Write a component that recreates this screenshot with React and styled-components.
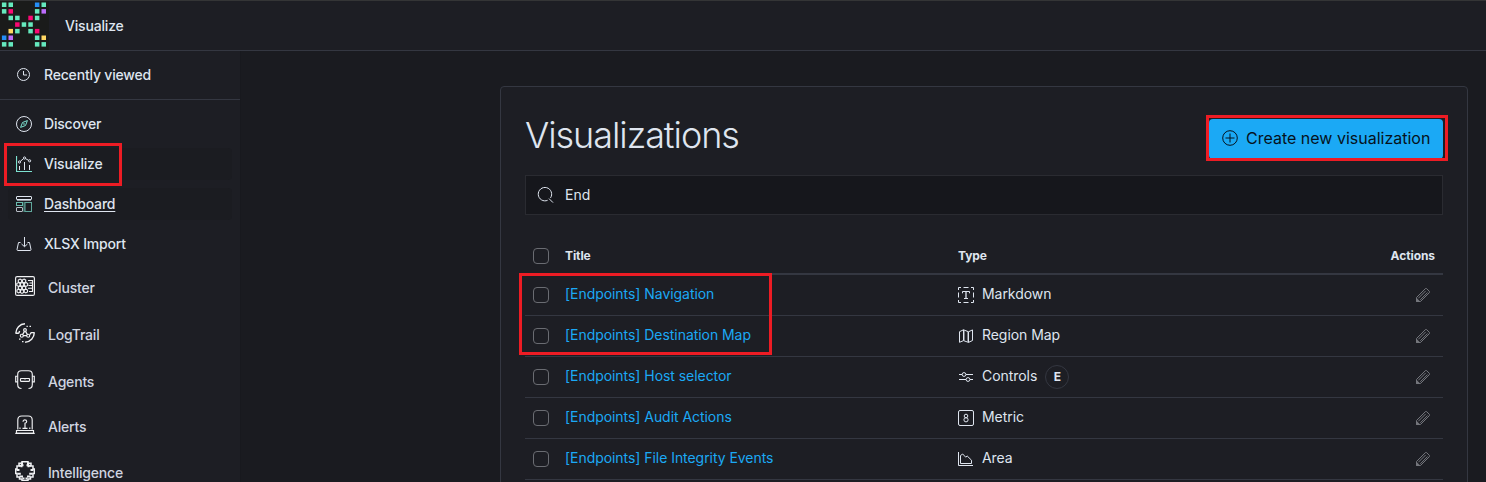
import React from 'react';
import styled, { createGlobalStyle, css } from 'styled-components';

const GlobalStyle = createGlobalStyle`
  *, *::before, *::after { box-sizing: border-box; }
  html, body { margin: 0; padding: 0; }
  body {
    background: #1a1b20;
    color: #dfe5ef;
    font-family: Inter, "Liberation Sans", sans-serif;
    font-size: 14px;
    line-height: 20px;
    overflow: hidden;
  }
`;

const Page = styled.div`
  display: flex;
  flex-direction: column;
  height: 482px;
  overflow: hidden;
`;

const Header = styled.header`
  display: flex;
  align-items: center;
  flex: none;
  height: 51px;
  background: #1d1e24;
  border-top: 1px solid #343536;
  border-bottom: 1px solid #343741;
`;

const Logo = styled.svg`
  display: block;
  width: 49px;
  height: 49px;
  background: #1a1b1a;
`;

const Crumb = styled.span`
  margin-left: 16px;
  padding-top: 1px;
  font-weight: 550;
  letter-spacing: -0.18px;
`;

const Body = styled.div`
  display: flex;
  flex: 1;
  min-height: 0;
`;

const Sidebar = styled.nav`
  flex: none;
  width: 241px;
  background: #1d1e24;
  border-right: 1px solid #18191e;
  overflow: hidden;
`;

const Recent = styled.div`
  height: 49px;
  padding: 8px;
  border-bottom: 1px solid #343741;
`;

const NavGroup = styled.div`
  display: flex;
  flex-direction: column;
  gap: 8px;
  padding: 8px;
`;

const NavItem = styled.a`
  position: relative;
  display: flex;
  align-items: center;
  height: 32px;
  padding: 0 8px;
  gap: 12px;
  border-radius: 4px;
  font-weight: 550;
  letter-spacing: -0.19px;
  color: #dfe5ef;
  text-decoration: ${p => (p.$hover ? 'underline' : 'none')};
  text-underline-offset: 2px;
  ${p => (p.$hover || p.$active) && css`background: #1b1c21;`}
`;

const PluginGroup = styled.div`
  display: flex;
  flex-direction: column;
  margin-top: -5px;
`;

const PluginItem = styled.a`
  display: flex;
  align-items: center;
  height: ${p => p.$height}px;
  flex: none;
  padding-left: 15px;
  gap: 13px;
  font-weight: 550;
  letter-spacing: -0.19px;
  color: #d0d5e0;
  span { padding-top: 4px; }
`;

const Icon = styled.svg`
  flex: none;
  display: block;
  width: ${p => p.$size || 16}px;
  height: ${p => p.$size || 16}px;
  fill: none;
  stroke: ${p => p.$color || '#dfe5ef'};
  stroke-width: ${p => p.$stroke || 1};
`;

const Main = styled.main`
  flex: 1;
  padding: 35px 18px 0 259px;
`;

const Panel = styled.section`
  height: 500px;
  padding: 24px;
  background: #1d1e24;
  border: 1px solid #343741;
  border-radius: 4px;
`;

const TitleRow = styled.div`
  display: flex;
  align-items: center;
  justify-content: space-between;
  height: 48px;
  margin-bottom: 16px;
`;

const Title = styled.h1`
  margin: 0;
  font-size: 36px;
  line-height: 48px;
  font-weight: 300;
  letter-spacing: -1.05px;
`;

const CreateButton = styled.button`
  position: relative;
  display: flex;
  align-items: center;
  gap: 8px;
  width: 234px;
  height: 40px;
  margin-top: 7px;
  padding: 0 12px 2px 13px;
  border: 0;
  border-radius: 4px;
  background: #1ba9f5;
  color: #06121c;
  font: 400 16px/24px Inter, "Liberation Sans", sans-serif;
  white-space: nowrap;
`;

const Highlight = styled.i`
  position: absolute;
  z-index: 2;
  top: ${p => p.$top}px;
  left: ${p => p.$left}px;
  width: ${p => p.$width}px;
  height: ${p => p.$height}px;
  border: 3px solid #ed1c24;
  pointer-events: none;
`;

const Search = styled.div`
  display: flex;
  align-items: center;
  gap: 11px;
  height: 40px;
  padding: 0 11px;
  background: #16171c;
  border: 1px solid #2a2b31;
`;

const Table = styled.div`
  margin-top: 18px;
`;

const Row = styled.div`
  position: relative;
  display: grid;
  grid-template-columns: 40px 393px 1fr auto;
  align-items: center;
  height: 41px;
  padding-right: 12px;
  border-bottom: 1px solid #343741;
`;

const HeadRow = styled(Row)`
  height: 42px;
  padding-top: 6px;
  padding-right: 8px;
  border-bottom-width: 2px;
  font-size: 12px;
  font-weight: 650;
  letter-spacing: -0.08px;
`;

const Checkbox = styled.span`
  width: 16px;
  height: 16px;
  margin-left: 8px;
  border: 1px solid #6a6c72;
  border-radius: 4px;
`;

const TitleLink = styled.a`
  color: #1ba9f5;
  padding-bottom: 2px;
  letter-spacing: -0.05px;
  white-space: nowrap;
`;

const TypeCell = styled.span`
  display: flex;
  align-items: center;
  gap: 8px;
  height: 24px;
  letter-spacing: -0.05px;
`;

const TypeName = styled.span`
  padding-bottom: 2px;
`;

const Badge = styled.span`
  width: 24px;
  height: 24px;
  border: 1px solid #343741;
  border-radius: 50%;
  text-align: center;
  font-size: 12px;
  line-height: 22px;
  font-weight: 700;
`;

const LOGO_ROWS = ['GG...BG', 'GR...GP', '.GG.RG.', '..RGG..', '.YG.GR.', 'BP...GY', 'GG...GG'];
const LOGO_COLORS = { G: '#65e9bd', B: '#258df5', R: '#fa0873', P: '#bd6cfb', Y: '#ffd762' };

const BrandLogo = () => (
  <Logo viewBox="0 0 49 49">
    {LOGO_ROWS.flatMap((row, y) =>
      row.split('').map((c, x) =>
        c === '.' ? null : (
          <rect key={`${x}-${y}`} x={1.9 + x * 6.6} y={1.5 + y * 6.6} width="4.5" height="4.5" fill={LOGO_COLORS[c]} />
        )
      )
    )}
  </Logo>
);

const TEAL = '#7de2d1';

const ICONS = {
  clock: <><circle cx="7.5" cy="7.5" r="6" /><path d="M7.5 4v4h3.5" /></>,
  discover: (
    <>
      <circle cx="8" cy="8" r="7.5" />
      <path stroke={TEAL} d="M11.4 4.6 9.500 9.500 4.600 11.400 6.500 6.500z" />
      <circle stroke={TEAL} cx="8" cy="8" r=".4" />
    </>
  ),
  visualize: (
    <>
      <path stroke={TEAL} strokeWidth="1.2" d="M.5 0v15.500H16" />
      <path d="M3.500 14v-4M8.500 14V6M13.500 14V9" />
      <path d="M4.400 5.300 7.400 2.700M9.600 2.700l3 1.600" />
      <circle cx="3.500" cy="6" r="1.100" /><circle cx="8.500" cy="2" r="1.100" /><circle cx="13.600" cy="4.800" r="1.100" />
    </>
  ),
  dashboard: (
    <>
      <rect x=".5" y=".5" width="15" height="3" rx=".5" />
      <path strokeOpacity=".6" d="M1 4.500h14" />
      <rect stroke={TEAL} strokeOpacity=".8" x=".5" y="6.500" width="6" height="3" />
      <rect strokeOpacity=".8" x=".5" y="11.500" width="6" height="4" rx=".5" />
      <rect stroke={TEAL} strokeOpacity=".7" x="9" y="6.500" width="6.500" height="9" />
      <path stroke={TEAL} strokeOpacity=".6" d="M8 6v10" />
    </>
  ),
  importIcon: <path d="M4.500 6.500h-2L1 13.500q0 1 1 1h12q1 0 1-1L13.500 6.500h-2M8.500 1v9.500M5.500 8l3 2.700 3-2.700" />,
  search: <path d="M10.600 13.300a6.700 6.700 0 1 1 2.900-2.400M12 11.600l4 4" />,
  plus: <><circle cx="8" cy="8" r="7.300" /><path d="M8 3.500v9M3.500 8h9" /></>,
  markdown: (
    <>
      <path d="M.5 3V.5H3M5.500.5h5M13 .5h2.500V3M15.500 5.500v5M15.500 13v2.500H13M10.500 15.500h-5M3 15.500H.5V13M.5 10.500v-5" />
      <path d="M4.500 6.300V4.500h7v1.800M6 11.500h4" /><path strokeOpacity=".65" strokeWidth="2" d="M8 5v6" />
    </>
  ),
  map: (
    <>
      <path d="M1.500 3.700 5.500 1.800v10.800l-4 1.700zM5.500 1.800l5 2v10.600l-5-1.800M10.500 3.800l4-1.900v10.600l-4 1.900" />
      <path strokeOpacity=".45" d="M6.500 2.500v10M9.500 3.700v10" />
    </>
  ),
  controls: <><path d="M1 5.500h3.200M8 5.500h7M1 10.500h7M12 10.500h3" /><circle cx="6" cy="5.500" r="1.900" /><circle cx="10" cy="10.500" r="1.900" /></>,
  metric: <><rect x=".5" y=".5" width="15" height="15" rx="1.500" /><circle cx="8" cy="6" r="1.800" /><circle cx="8" cy="9.800" r="2.100" /></>,
  area: <path d="M.5 1v13.500H15M2.500 12.500v-8L4.700 3l3 3.200L9.200 5l4.300 4.200v3.300z" />,
  pencil: (
    <>
      <path d="M1.500 14.500v-4l8.800-8.800q.7-.7 1.400 0l2.600 2.600q.7.7 0 1.400L5.500 14.500zM3.300 11.300l7.400-7.400M5.200 12.900l7.300-7.300" />
      <path fill="#74767c" d="M1.500 14.500v-3.200l3.200 3.200z" />
    </>
  ),
  cluster: (
    <>
      <rect x=".6" y=".6" width="18.800" height="18.800" rx="1.500" />
      {[[5, 5], [9, 5], [3.500, 8.500], [7, 8.500], [11, 8.500], [5, 12], [9, 12], [7, 15.500], [3.700, 15], [10.800, 15]].map(([x, y]) => (
        <path key={`${x}-${y}`} d={`M${x} ${y - 1.900}l1.700 1v1.800l-1.700 1-1.700-1v-1.800z`} />
      ))}
      <path d="M13 4.500h5M14.500 7H18M13.500 9.500H18M13 12.200h5M14 15.500h4M17.500 4v12" />
    </>
  ),
  logtrail: (
    <>
      <path strokeWidth="1.400" d="M.8 10.200C.9 5.200 4.800.9 10 .7M19.300 9.500c0 5.300-4 9.600-9.200 9.800M.5 10.300h3.300M16 9.600h3.500M3.800 10.300l.8-2.200M16 9.600l-.8 2" />
      <circle cx="10" cy="7" r="1.400" /><circle cx="6.800" cy="12.700" r="1.500" /><circle cx="13.200" cy="12.700" r="1.500" />
      <path strokeWidth="1.300" d="M9.500 8.300 7.600 11.500M10.500 8.300l1.900 3.200M8 12.700h4M11.500 3.400h1.300M14.500 3.400h1.500M4 16.200h1.500M7 18.700h1.500" />
    </>
  ),
  agents: (
    <>
      <path d="M6.500 18.500C4 18.500 2.700 17 2.700 14.500V4.500Q2.700.7 6.500.7h7q3.800 0 3.800 3.800v10c0 2.500-1.300 4-3.800 4" />
      <path d="M2.700 6.200H.7v5.600h2M17.300 6.200h2v5.600h-2" /><rect x="5.500" y="8.500" width="9" height="2.800" rx=".5" />
      <path strokeOpacity=".6" d="M9.500 9.500h1" />
    </>
  ),
  alerts: (
    <>
      <path d="M2.800 14.500V5Q2.800 1 6.800 1h6.400q4 0 4 4v9.500M1.500 15.500h17v2.700h-17z" />
      <path d="M.3 18.300h19.400M8 6.800Q8 4.800 9.700 4.800q2 0 2 1.700 0 1.300-1.700 1.700V13M7.500 13.300h5M5 12.500v1.500M14.800 12.500v1.500" />
    </>
  ),
  brain: (
    <>
      <path strokeWidth="1.5" d="M7 .8h6v1.400h3V5h2v3h1.300v4.500H18V16h-2.500v2H13v1.400H7V18H4.500v-2H2v-3.500H.7V8H2V5h2V2.200h3z" />
      <path strokeWidth="2" d="M7 1.500v2.700h1.500M13 1.500v2.700h-1.500M4 4.800h2.500v1.500M16 4.800h-2.500v1.500M1.500 9h3M18.500 9h-3M2.500 12.800h3.300M17.500 12.800h-3.300M4.500 15.500H7v-1M15.500 15.500H13v-1M8.500 18.500V16.500M11.500 18.500V16.500" />
    </>
  ),
};

const Glyph = ({ name, size = 16, box = 16, color, stroke }) => (
  <Icon viewBox={`0 0 ${box} ${box}`} $size={size} $color={color} $stroke={stroke}>
    {ICONS[name]}
  </Icon>
);

const APPS = [
  { label: 'Discover', icon: 'discover' },
  { label: 'Visualize', icon: 'visualize', active: true },
  { label: 'Dashboard', icon: 'dashboard', hover: true },
  { label: 'XLSX Import', icon: 'importIcon' },
];

const PLUGINS = [
  { label: 'Cluster', icon: 'cluster', height: 46 },
  { label: 'LogTrail', icon: 'logtrail', height: 48 },
  { label: 'Agents', icon: 'agents', height: 45 },
  { label: 'Alerts', icon: 'alerts', height: 46 },
  { label: 'Intelligence', icon: 'brain', height: 46 },
];

const ROWS = [
  { title: 'Navigation', type: 'Markdown', icon: 'markdown', marked: true },
  { title: 'Destination Map', type: 'Region Map', icon: 'map' },
  { title: 'Host selector', type: 'Controls', icon: 'controls', badge: 'E' },
  { title: 'Audit Actions', type: 'Metric', icon: 'metric' },
  { title: 'File Integrity Events', type: 'Area', icon: 'area' },
];

export default function App() {
  return (
    <Page>
      <GlobalStyle />
      <Header>
        <BrandLogo />
        <Crumb>Visualize</Crumb>
      </Header>
      <Body>
        <Sidebar>
          <Recent>
            <NavItem><Glyph name="clock" />Recently viewed</NavItem>
          </Recent>
          <NavGroup>
            {APPS.map(a => (
              <NavItem key={a.label} $active={a.active} $hover={a.hover}>
                <Glyph name={a.icon} />
                {a.label}
                {a.active && <Highlight $top={-5} $left={-4} $width={118} $height={43} />}
              </NavItem>
            ))}
          </NavGroup>
          <PluginGroup>
            {PLUGINS.map(p => (
              <PluginItem key={p.label} $height={p.height}>
                <Glyph name={p.icon} size={20} box={20} color="#f0f1f3" stroke={1.15} />
                <span>{p.label}</span>
              </PluginItem>
            ))}
          </PluginGroup>
        </Sidebar>
        <Main>
          <Panel>
            <TitleRow>
              <Title>Visualizations</Title>
              <CreateButton>
                <Glyph name="plus" color="#06121c" />
                Create new visualization
                <Highlight $top={-4} $left={-3} $width={242} $height={46} />
              </CreateButton>
            </TitleRow>
            <Search><Glyph name="search" size={17} box={17} />End</Search>
            <Table>
              <HeadRow>
                <Checkbox /><span>Title</span><span>Type</span><span>Actions</span>
              </HeadRow>
              {ROWS.map(r => (
                <Row key={r.title}>
                  <Checkbox />
                  <TitleLink>[Endpoints] {r.title}</TitleLink>
                  <TypeCell>
                    <Glyph name={r.icon} />
                    <TypeName>{r.type}</TypeName>
                    {r.badge && <Badge>{r.badge}</Badge>}
                  </TypeCell>
                  <Glyph name="pencil" color="#74767c" />
                  {r.marked && <Highlight $top={-2} $left={-6} $width={253} $height={82} />}
                </Row>
              ))}
            </Table>
          </Panel>
        </Main>
      </Body>
    </Page>
  );
}
